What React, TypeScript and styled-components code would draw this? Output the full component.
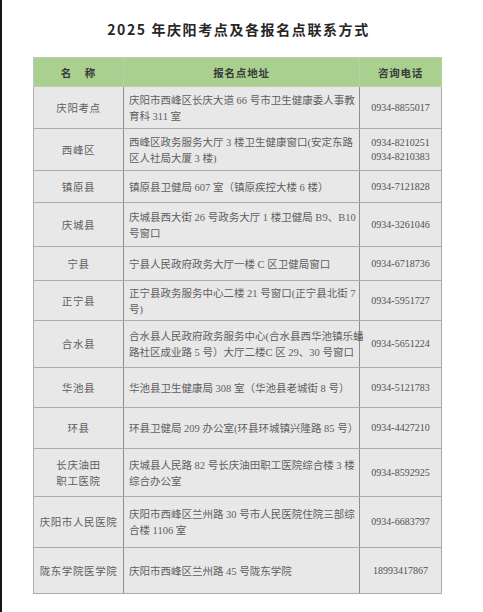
import React from "react";
import styled, { createGlobalStyle } from "styled-components";

const Global = createGlobalStyle`
  html, body { margin: 0; padding: 0; background: #fff; }
  body {
    border-left: 2px solid #161616;
    min-height: 612px;
    box-sizing: border-box;
    font-family: "Liberation Serif", "Noto Sans CJK SC", serif;
  }
`;

const Page = styled.div`
  padding: 18px 0 0 31px;
  width: 405px;
`;

const Title = styled.h1`
  margin: 0 0 17px 0;
  height: 22px;
  line-height: 22px;
  text-align: center;
  font-family: "Noto Sans CJK SC", "Noto Sans", sans-serif;
  font-size: 14px;
  font-weight: 700;
  letter-spacing: 1.6px;
  color: #262626;
  padding-left: 6px;
`;

const Table = styled.table`
  width: 405px;
  border-collapse: collapse;
  table-layout: fixed;
  border: 1px solid #c4c4c4;
`;

const HeadRow = styled.tr`
  height: 29px;
  background: #a9d08e;
`;

const Th = styled.th<{ $w: number }>`
  width: ${(p) => p.$w}px;
  border: 1px solid #b9cfa9;
  border-left-color: #8f9c86;
  font-family: "Noto Sans CJK SC", sans-serif;
  font-size: 10.5px;
  font-weight: 700;
  color: #3a3a3a;
  letter-spacing: 0.8px;
  padding: 0;
  text-align: center;
  white-space: pre;
  &:first-child { border-left-color: #c4c4c4; }
`;

const Row = styled.tr<{ $h: number }>`
  height: ${(p) => p.$h}px;
  background: #e8e8e8;
`;

const NameCell = styled.td`
  border: 1px solid #ababab;
  border-right-color: #8e8e8e;
  text-align: center;
  font-family: "Noto Sans CJK SC", sans-serif;
  font-size: 10.5px;
  letter-spacing: 0.6px;
  line-height: 16px;
  color: #5e5e5e;
  padding: 0;
`;

const AddrCell = styled.td`
  border: 1px solid #ababab;
  border-right-color: #8e8e8e;
  text-align: left;
  font-family: "Liberation Serif", "Noto Sans CJK SC", serif;
  font-size: 10.5px;
  line-height: 16px;
  color: #5e5e5e;
  padding: 2px 0 0 5px;
  white-space: nowrap;
`;

const PhoneCell = styled.td`
  border: 1px solid #ababab;
  text-align: center;
  font-family: "Liberation Serif", serif;
  font-size: 10px;
  line-height: 14px;
  color: #505050;
  padding: 0;
`;

const Line = styled.div``;

type Item = { name: string[]; addr: string[]; phone: string[]; h: number };

const rows: Item[] = [
  { name: ["庆阳考点"], addr: ["庆阳市西峰区长庆大道 66 号市卫生健康委人事教", "育科 311 室"], phone: ["0934-8855017"], h: 42 },
  { name: ["西峰区"], addr: ["西峰区政务服务大厅 3 楼卫生健康窗口(安定东路", "区人社局大厦 3 楼)"], phone: ["0934-8210251", "0934-8210383"], h: 42 },
  { name: ["镇原县"], addr: ["镇原县卫健局 607 室（镇原疾控大楼 6 楼）"], phone: ["0934-7121828"], h: 32 },
  { name: ["庆城县"], addr: ["庆城县西大街 26 号政务大厅 1 楼卫健局 B9、B10", "号窗口"], phone: ["0934-3261046"], h: 44 },
  { name: ["宁县"], addr: ["宁县人民政府政务大厅一楼 C 区卫健局窗口"], phone: ["0934-6718736"], h: 34 },
  { name: ["正宁县"], addr: ["正宁县政务服务中心二楼 21 号窗口(正宁县北街 7", "号)"], phone: ["0934-5951727"], h: 40 },
  { name: ["合水县"], addr: ["合水县人民政府政务服务中心(合水县西华池镇乐蟠", "路社区成业路 5 号）大厅二楼C 区 29、30 号窗口"], phone: ["0934-5651224"], h: 47 },
  { name: ["华池县"], addr: ["华池县卫生健康局 308 室（华池县老城街 8 号）"], phone: ["0934-5121783"], h: 40 },
  { name: ["环县"], addr: ["环县卫健局 209 办公室(环县环城镇兴隆路 85 号）"], phone: ["0934-4427210"], h: 41 },
  { name: ["长庆油田", "职工医院"], addr: ["庆城县人民路 82 号长庆油田职工医院综合楼 3 楼", "综合办公室"], phone: ["0934-8592925"], h: 48 },
  { name: ["庆阳市人民医院"], addr: ["庆阳市西峰区兰州路 30 号市人民医院住院三部综", "合楼 1106 室"], phone: ["0934-6683797"], h: 51 },
  { name: ["陇东学院医学院"], addr: ["庆阳市西峰区兰州路 45 号陇东学院"], phone: ["18993417867"], h: 46 },
];

export default function App() {
  return (
    <>
      <Global />
      <Page>
        <Title>2025 年庆阳考点及各报名点联系方式</Title>
        <Table>
          <thead>
            <HeadRow>
              <Th $w={89}>{"名    称"}</Th>
              <Th $w={235}>报名点地址</Th>
              <Th $w={81}>咨询电话</Th>
            </HeadRow>
          </thead>
          <tbody>
            {rows.map((r, i) => (
              <Row key={i} $h={r.h}>
                <NameCell>
                  {r.name.map((n, j) => (
                    <Line key={j}>{n}</Line>
                  ))}
                </NameCell>
                <AddrCell>
                  {r.addr.map((a, j) => (
                    <Line key={j}>{a}</Line>
                  ))}
                </AddrCell>
                <PhoneCell>
                  {r.phone.map((p, j) => (
                    <Line key={j}>{p}</Line>
                  ))}
                </PhoneCell>
              </Row>
            ))}
          </tbody>
        </Table>
      </Page>
    </>
  );
}
